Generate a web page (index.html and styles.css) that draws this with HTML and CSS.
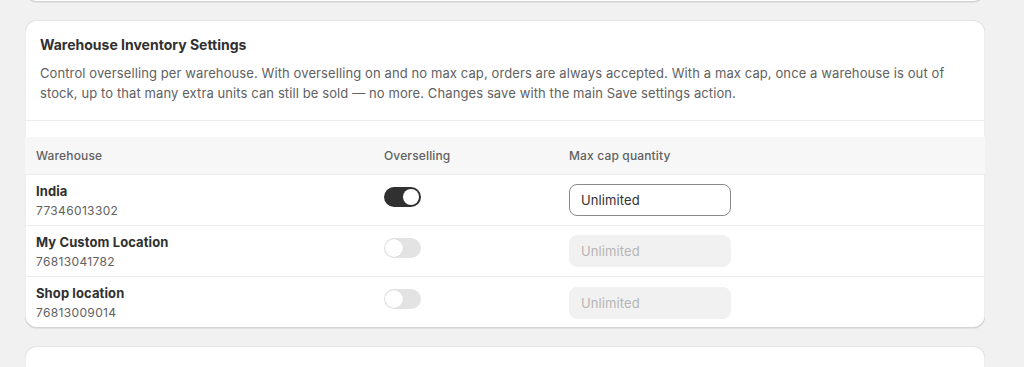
FILE: index.html
```html
<!DOCTYPE html>
<html lang="en">
<head>
<meta charset="utf-8">
<title>Warehouse Inventory Settings</title>
<link rel="stylesheet" href="styles.css">
</head>
<body>
<div class="page">
  <div class="card card-prev"></div>

  <section class="card">
    <div class="card-head">
      <h2 class="title">Warehouse Inventory Settings</h2>
      <p class="desc">Control overselling per warehouse. With overselling on and no max cap, orders are always accepted. With a max cap, once a warehouse is out of stock, up to that many extra units can still be sold — no more. Changes save with the main Save settings action.</p>
    </div>
    <div class="table">
      <div class="row head-row">
        <div class="cell">Warehouse</div>
        <div class="cell">Overselling</div>
        <div class="cell">Max cap quantity</div>
      </div>
      <div class="row">
        <div class="cell name-cell"><div class="name">India</div><div class="id">77346013302</div></div>
        <div class="cell toggle-cell"><span class="toggle on"><span class="knob"></span></span></div>
        <div class="cell"><div class="input">Unlimited</div></div>
      </div>
      <div class="row">
        <div class="cell name-cell"><div class="name">My Custom Location</div><div class="id">76813041782</div></div>
        <div class="cell toggle-cell"><span class="toggle"><span class="knob"></span></span></div>
        <div class="cell"><div class="input disabled">Unlimited</div></div>
      </div>
      <div class="row last">
        <div class="cell name-cell"><div class="name">Shop location</div><div class="id">76813009014</div></div>
        <div class="cell toggle-cell"><span class="toggle"><span class="knob"></span></span></div>
        <div class="cell"><div class="input disabled">Unlimited</div></div>
      </div>
    </div>
  </section>

  <div class="card card-next"></div>
</div>
</body>
</html>
```
FILE: styles.css
```css
* { box-sizing: border-box; }
html, body { margin: 0; padding: 0; }
body {
  background: #f1f1f1;
  font-family: Inter, "Noto Sans", "Liberation Sans", sans-serif;
  color: #303030;
  font-size: 13px;
  line-height: 20px;
  overflow: hidden;
  height: 367px;
}
.page {
  width: 960px;
  margin-left: 25px;
  display: flex;
  flex-direction: column;
  gap: 18px;
}
.card {
  background: #fff;
  border-radius: 12px;
  box-shadow: 0 1px 0 0 rgba(26,26,26,0.07), 0 1px 0 0 rgba(204,204,204,0.5) inset, 0 -1px 0 0 rgba(0,0,0,0.17) inset, -1px 0 0 0 rgba(0,0,0,0.07) inset, 1px 0 0 0 rgba(0,0,0,0.07) inset;
  overflow: hidden;
}
.card-prev { height: 42px; margin-top: -40px; }
.card-next { height: 80px; }
.card-head {
  padding: 15px 16px 17px 15px;
  border-bottom: 1px solid #ebebeb;
}
.title {
  margin: 0;
  font-size: 14px;
  line-height: 20px;
  font-weight: 650;
  color: #303030;
}
.desc {
  margin: 8px 0 0;
  color: #616161;
  font-size: 13px;
  line-height: 20px;
  letter-spacing: 0.1px;
}
.table { padding-top: 16px; }
.row {
  display: grid;
  grid-template-columns: 348px 185px 1fr;
  padding-left: 11px;
  height: 51px;
  border-bottom: 1px solid #ebebeb;
}
.row.last { border-bottom: none; height: 51px; }
.head-row {
  background: #f7f7f7;
  height: 38px;
  align-items: center;
  color: #616161;
  font-size: 12px;
  font-weight: 500;
  letter-spacing: 0.15px;
  padding-top: 1px;
}
.cell { display: flex; align-items: center; }
.name-cell { flex-direction: column; align-items: flex-start; justify-content: center; padding-top: 1px; }
.name { font-weight: 650; font-size: 13px; line-height: 20px; color: #303030; letter-spacing: 0.1px; }
.id { font-size: 12px; line-height: 20px; color: #616161; letter-spacing: 0.35px; }
.toggle-cell { align-items: flex-start; padding-top: 12px; }
.toggle {
  width: 37px;
  height: 20px;
  border-radius: 10px;
  background: #e3e3e3;
  display: flex;
  align-items: center;
  padding: 1px;
}
.knob {
  width: 18px;
  height: 18px;
  border-radius: 50%;
  background: #fff;
  box-shadow: 0 0 0 0.5px rgba(0,0,0,0.06);
}
.toggle.on { background: #303030; justify-content: flex-end; padding: 2px; }
.toggle.on .knob { width: 16px; height: 16px; box-shadow: none; }
.input {
  width: 162px;
  height: 32px;
  border: 1px solid #8a8a8a;
  border-radius: 8px;
  padding: 0 11px;
  display: flex;
  align-items: center;
  font-size: 13px;
  color: #303030;
  background: #fff;
  letter-spacing: 0.1px;
}
.input.disabled {
  background: #f1f1f1;
  border-color: #f1f1f1;
  color: #b5b5b5;
}
```
